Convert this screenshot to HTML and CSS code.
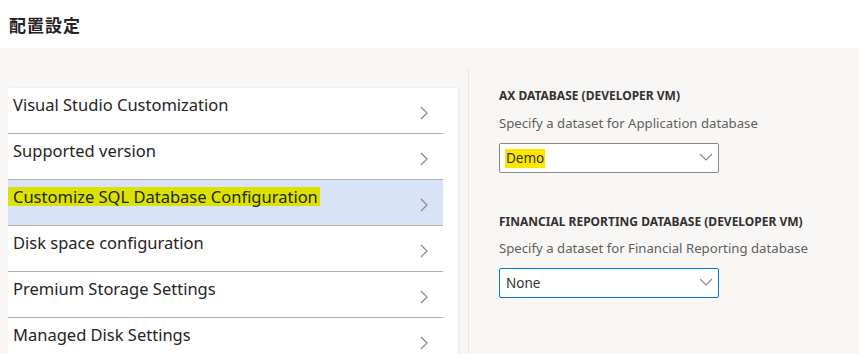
FILE: index.html
```html
<!DOCTYPE html>
<html lang="ja">

<head>
    <meta charset="UTF-8">
    <meta name="viewport" content="width=device-width, initial-scale=1.0">
    <title>配置設定</title>
    <link rel="stylesheet" href="styles.css">
</head>

<body>
    <header class="topbar">
        <h1>配置設定</h1>
    </header>
    <div class="main">
        <div class="leftcol">
            <ul class="menu">
                <li><span class="txt">Visual Studio Customization</span><svg class="chev" viewBox="0 0 8 14"><polyline points="1,1 7,7 1,13"/></svg></li>
                <li><span class="txt">Supported version</span><svg class="chev" viewBox="0 0 8 14"><polyline points="1,1 7,7 1,13"/></svg></li>
                <li class="active"><span class="txt mark">Customize SQL Database Configuration</span><svg class="chev" viewBox="0 0 8 14"><polyline points="1,1 7,7 1,13"/></svg></li>
                <li><span class="txt">Disk space configuration</span><svg class="chev" viewBox="0 0 8 14"><polyline points="1,1 7,7 1,13"/></svg></li>
                <li><span class="txt">Premium Storage Settings</span><svg class="chev" viewBox="0 0 8 14"><polyline points="1,1 7,7 1,13"/></svg></li>
                <li><span class="txt">Managed Disk Settings</span><svg class="chev" viewBox="0 0 8 14"><polyline points="1,1 7,7 1,13"/></svg></li>
            </ul>
        </div>
        <div class="rightcol">
            <div class="field">
                <h2>AX DATABASE (DEVELOPER VM)</h2>
                <p>Specify a dataset for Application database</p>
                <div class="dropdown"><span class="val hl">Demo</span><svg class="down" viewBox="0 0 14 8"><polyline points="1,1 7,7 13,1"/></svg></div>
            </div>
            <div class="field second">
                <h2>FINANCIAL REPORTING DATABASE (DEVELOPER VM)</h2>
                <p>Specify a dataset for Financial Reporting database</p>
                <div class="dropdown focus"><span class="val">None</span><svg class="down" viewBox="0 0 14 8"><polyline points="1,1 7,7 13,1"/></svg></div>
            </div>
        </div>
    </div>
</body>

</html>
```

FILE: styles.css
```css
html,
body,
div,
ul,
li,
h1,
h2,
p {
    margin: 0;
    padding: 0;
}

ul {
    list-style: none;
}

body {
    background: #f8f7f6;
    font-family: "Noto Sans", "Noto Sans CJK JP", sans-serif;
    color: #323130;
    height: 354px;
    overflow: hidden;
}

.topbar {
    height: 48px;
    background: #fff;
    display: flex;
    align-items: center;
    padding-left: 9px;
}
.topbar h1 {
    font-family: "Noto Sans CJK JP", sans-serif;
    font-size: 17px;
    font-weight: bold;
    color: #252423;
    letter-spacing: 1px;
}

.main {
    display: flex;
}

.leftcol {
    width: 458px;
    padding: 40px 0 0 8px;
    box-sizing: border-box;
}
.menu {
    width: 450px;
    background: #fff;
    box-shadow: 1px 0 2px rgba(0, 0, 0, 0.08);
    padding-right: 15px;
    box-sizing: border-box;
}
.menu li {
    height: 45px;
    border-bottom: 1px solid #b3b0ad;
    display: flex;
    justify-content: space-between;
}
.menu li.active {
    background: #d8e3f8;
}
.menu .txt {
    display: inline-block;
    align-self: flex-start;
    margin-top: 7px;
    padding-left: 5px;
    padding-right: 2px;
    height: 19px;
    line-height: 19px;
    font-size: 16.5px;
    color: #252423;
}
.menu .mark {
    background: #d9e200;
}
.chev {
    width: 8px;
    height: 14px;
    margin: 18px 15px 0 0;
    fill: none;
    stroke: #8a8886;
    stroke-width: 1.2;
}

.rightcol {
    margin: 20px 0 0 10px;
    border-left: 1px solid #e8e6e4;
    padding-left: 30px;
    flex: 1;
    height: 300px;
}
.field h2 {
    font-size: 12px;
    font-weight: bold;
    line-height: 16px;
    margin-top: 20px;
    color: #323130;
}
.field p {
    font-size: 13.2px;
    line-height: 20px;
    margin-top: 9px;
    color: #605e5c;
}
.field.second h2 {
    margin-top: 41px;
}
.field.second p {
    margin-top: 8px;
}
.dropdown {
    margin-top: 10px;
    width: 220px;
    height: 30px;
    box-sizing: border-box;
    border: 1px solid #8a8886;
    border-radius: 2px;
    background: #fff;
    display: flex;
    align-items: center;
    justify-content: space-between;
    padding: 0 5px 0 5px;
}
.dropdown.focus {
    border-color: #0078d4;
}
.val {
    font-size: 13.5px;
    line-height: 19px;
    color: #323130;
    padding: 0 1px;
}
.val.hl {
    background: #ffe600;
}
.down {
    width: 14px;
    height: 8px;
    margin-top: -2px;
    fill: none;
    stroke: #8a8886;
    stroke-width: 1.1;
}
```
